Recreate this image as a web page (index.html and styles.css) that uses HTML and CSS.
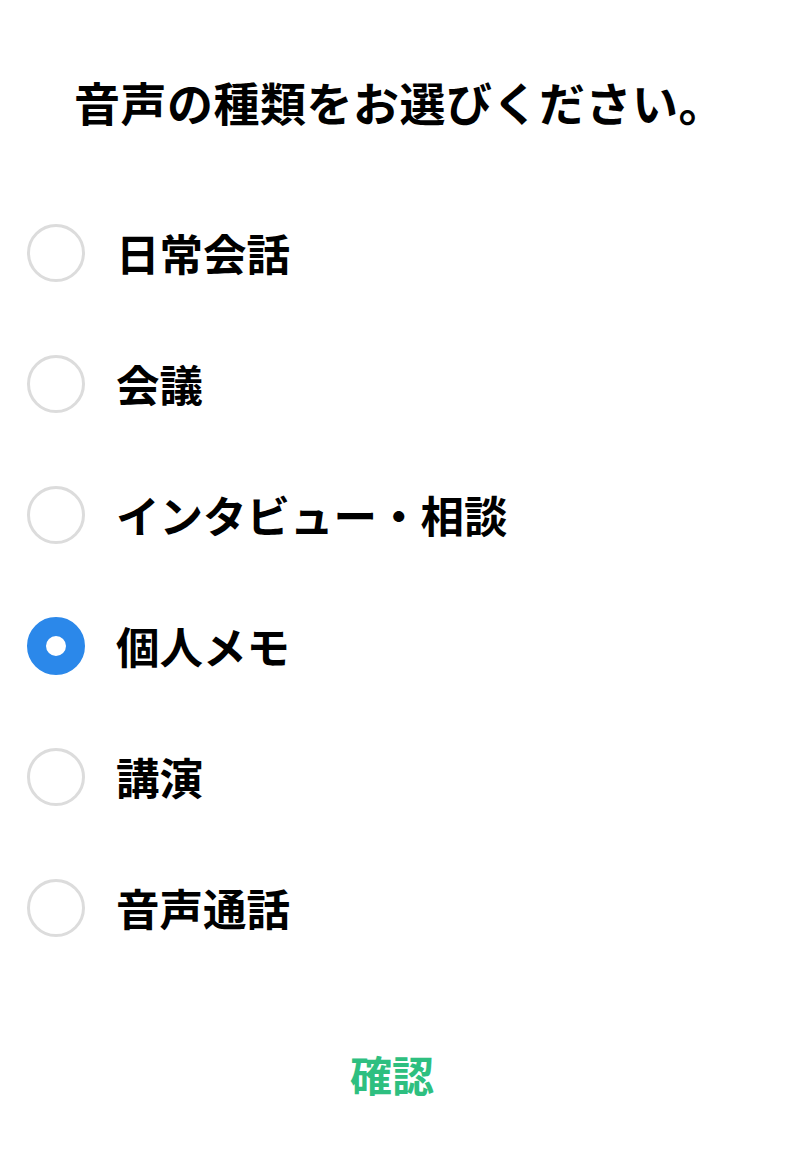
FILE: index.html
```html
<!DOCTYPE html>
<html lang="ja">
<head>
<meta charset="utf-8">
<link rel="stylesheet" href="styles.css">
</head>
<body>
<div class="page">
  <h1 class="title">音声の種類をお選びください。</h1>
  <ul class="options">
    <li class="option"><span class="radio"></span><span class="label">日常会話</span></li>
    <li class="option"><span class="radio"></span><span class="label">会議</span></li>
    <li class="option"><span class="radio"></span><span class="label">インタビュー・相談</span></li>
    <li class="option"><span class="radio checked"></span><span class="label">個人メモ</span></li>
    <li class="option"><span class="radio"></span><span class="label">講演</span></li>
    <li class="option"><span class="radio"></span><span class="label">音声通話</span></li>
  </ul>
  <div class="actions"><button class="confirm">確認</button></div>
</div>
</body>
</html>
```
FILE: styles.css
```css
html, body {
  margin: 0;
  padding: 0;
  background: #ffffff;
}
body {
  font-family: "Noto Sans CJK JP", "Noto Sans", sans-serif;
  color: #000;
}
.page {
  width: 800px;
  height: 1153px;
  display: flex;
  flex-direction: column;
}
.title {
  margin: 0;
  padding: 74px 0 0 74px;
  font-size: 46px;
  letter-spacing: 0.5px;
  line-height: 54px;
  font-weight: 700;
}
.options {
  list-style: none;
  margin: 0;
  padding: 59px 0 0 27px;
  display: flex;
  flex-direction: column;
}
.option {
  height: 131px;
  display: flex;
  align-items: center;
  gap: 31px;
}
.radio {
  width: 58px;
  height: 58px;
  box-sizing: border-box;
  border-radius: 50%;
  border: 3px solid #dcdcdc;
  flex: none;
}
.radio.checked {
  border: 19px solid #2b88ea;
  background: #fff;
}
.label {
  font-size: 43.5px;
  font-weight: 700;
  line-height: 1;
}
.actions {
  display: flex;
  justify-content: center;
  padding: 80px 16px 0 0;
}
.confirm {
  border: none;
  background: none;
  padding: 0;
  font-family: inherit;
  font-size: 42px;
  font-weight: 700;
  color: #2ebf80;
  line-height: 1;
}
```
